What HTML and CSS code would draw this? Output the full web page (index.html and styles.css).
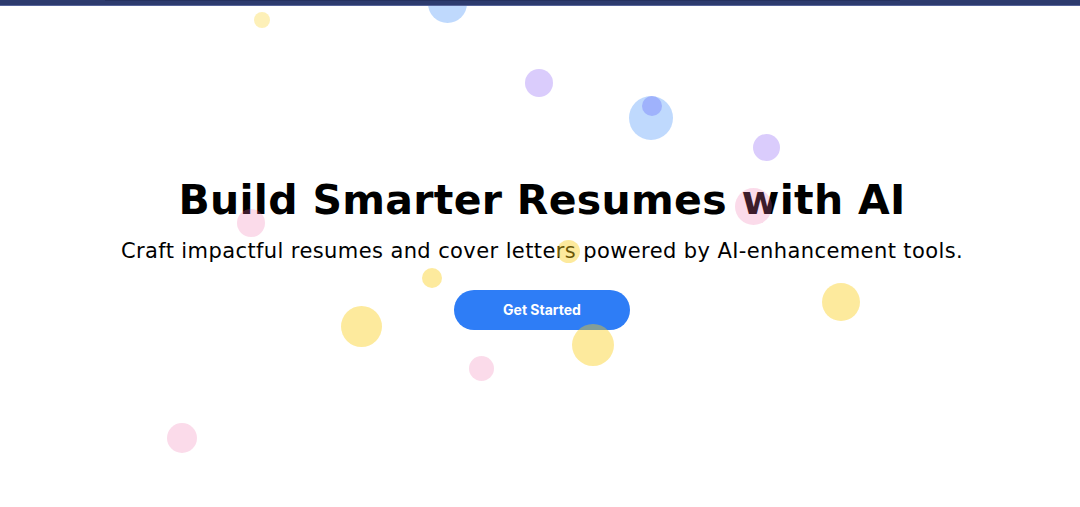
FILE: index.html
```html
<!DOCTYPE html>
<html lang="en">
<head>
<meta charset="utf-8">
<title>Build Smarter Resumes with AI</title>
<link rel="stylesheet" href="styles.css">
</head>
<body>
<header class="topbar"><div class="topbar-inner"></div></header>
<main class="hero">
  <h1 class="hero-title">Build Smarter Resumes with AI</h1>
  <p class="hero-sub">Craft impactful resumes and cover letters powered by AI-enhancement tools.</p>
  <a class="btn" href="#">Get Started</a>
  <div class="bubbles" aria-hidden="true">
    <span class="bubble yellow faint" style="left:254px;top:12px;width:16px;height:16px"></span>
    <span class="bubble blue" style="left:428px;top:-16px;width:39px;height:39px"></span>
    <span class="bubble purple" style="left:525px;top:69px;width:28px;height:28px"></span>
    <span class="bubble blue" style="left:629px;top:96px;width:44px;height:44px"></span>
    <span class="bubble indigo" style="left:642px;top:96px;width:20px;height:20px"></span>
    <span class="bubble purple" style="left:753px;top:134px;width:27px;height:27px"></span>
    <span class="bubble pink" style="left:735px;top:188px;width:37px;height:37px"></span>
    <span class="bubble yellow" style="left:822px;top:283px;width:38px;height:38px"></span>
    <span class="bubble pink" style="left:237px;top:209px;width:28px;height:28px"></span>
    <span class="bubble yellow" style="left:557px;top:240px;width:23px;height:23px"></span>
    <span class="bubble yellow" style="left:422px;top:268px;width:20px;height:20px"></span>
    <span class="bubble yellow" style="left:341px;top:306px;width:41px;height:41px"></span>
    <span class="bubble yellow" style="left:572px;top:324px;width:42px;height:42px"></span>
    <span class="bubble pink" style="left:469px;top:356px;width:25px;height:25px"></span>
    <span class="bubble pink" style="left:167px;top:423px;width:30px;height:30px"></span>
  </div>
</main>
</body>
</html>
```
FILE: styles.css
```css
* { box-sizing: border-box; }
html, body { margin: 0; padding: 0; }
body {
  background: #ffffff;
  font-family: "DejaVu Sans", "Noto Sans", sans-serif;
  color: #000;
  overflow: hidden;
}
.topbar {
  position: relative;
  z-index: 5;
  height: 6px;
  background: #2d3b6e;
  border-bottom: 1px solid #56649a;
}
.topbar-inner {
  height: 1px;
  margin: 0 180px 0 105px;
  background: #25315f;
}
.hero {
  position: relative;
  height: 501px;
  display: flex;
  flex-direction: column;
  align-items: center;
  justify-content: center;
  text-align: center;
  padding: 0 0 8px 4px;
}
.hero-title {
  margin: 0;
  font-size: 41px;
  font-weight: 700;
  line-height: 48px;
  letter-spacing: 0.3px;
}
.hero-sub {
  margin: 12px 0 0;
  font-size: 21px;
  font-weight: 400;
  line-height: 30px;
  letter-spacing: 0.4px;
}
.btn {
  margin-top: 24px;
  display: inline-flex;
  align-items: center;
  justify-content: center;
  width: 176px;
  height: 40px;
  border-radius: 20px;
  background: #2e7df6;
  color: #fff;
  font-family: Inter, "DejaVu Sans", sans-serif;
  font-size: 14px;
  font-weight: 700;
  text-decoration: none;
}
.bubbles {
  position: absolute;
  inset: -6px 0 0 0;
  pointer-events: none;
  z-index: 2;
}
.bubble {
  position: absolute;
  border-radius: 50%;
  filter: blur(0.6px);
}
.yellow { background: rgba(250, 204, 21, 0.42); }
.yellow.faint { background: rgba(250, 204, 21, 0.3); }
.blue { background: rgba(96, 160, 250, 0.4); }
.purple { background: rgba(150, 110, 245, 0.35); }
.indigo { background: rgba(120, 130, 250, 0.45); }
.pink { background: rgba(240, 110, 170, 0.25); }
```
